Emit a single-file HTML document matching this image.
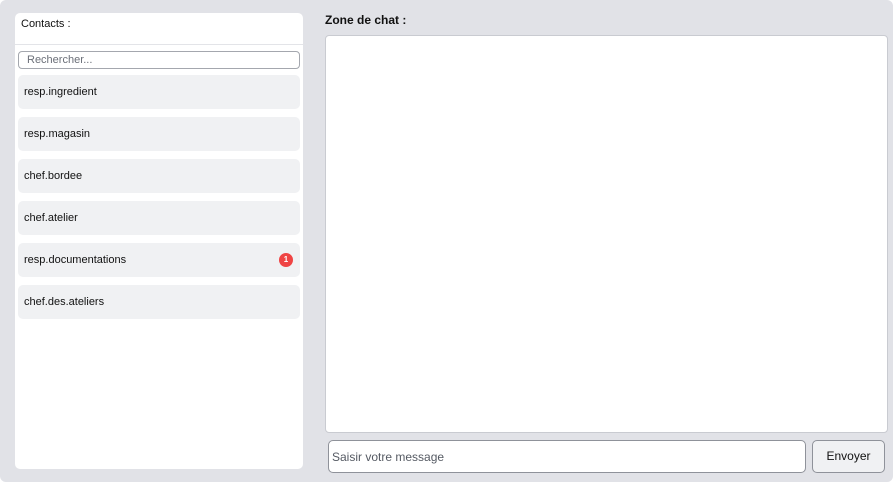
<!DOCTYPE html>
<html><head><style>
*{box-sizing:border-box;margin:0;padding:0}
body{width:895px;height:484px;background:#fff;font-family:"Liberation Sans",sans-serif;position:relative;overflow:hidden}
.outer{position:absolute;left:0;top:0;width:893px;height:482px;background:#e1e2e7;border-radius:6px}
.side{position:absolute;left:15px;top:13px;width:288px;height:456px;background:#fff;border-radius:5px}
.side h3{font-weight:normal;font-size:11px;color:#111;position:absolute;left:6px;top:5px}
.line{position:absolute;left:0;top:31px;width:288px;height:1px;background:#e3e4e8}
.search{position:absolute;left:3px;top:38px;width:282px;height:18px;border:1px solid #a4a7ae;border-radius:4px;font-size:11px;color:#6b6f78;padding:2px 8px}
.item{position:absolute;left:3px;width:282px;height:34px;background:#f0f1f3;border-radius:5px;font-size:11px;color:#111;padding:11px 6px}
.badge{position:absolute;right:7px;top:10px;width:14px;height:14px;border-radius:7px;background:#ef4444;color:#fff;font-size:8px;font-weight:bold;text-align:center;line-height:14px}
.title{position:absolute;left:325px;top:13px;font-size:12px;font-weight:bold;color:#111}
.chat{position:absolute;left:325px;top:35px;width:563px;height:398px;background:#fff;border:1px solid #c9cbd1;border-radius:4px}
.msg{position:absolute;left:328px;top:440px;width:478px;height:33px;background:#fff;border:1px solid #8f929a;border-radius:5px;font-size:12px;color:#555a63;padding:9px 3px}
.btn{position:absolute;left:812px;top:440px;width:73px;height:33px;background:#f0f1f3;border:1px solid #8f929a;border-radius:5px;font-size:12px;color:#111;text-align:center;line-height:31px}
</style></head><body>
<div class="outer"></div>
<div class="side">
<h3>Contacts :</h3><div class="line"></div>
<div class="search">Rechercher...</div>
<div class="item" style="top:62px">resp.ingredient</div>
<div class="item" style="top:104px">resp.magasin</div>
<div class="item" style="top:146px">chef.bordee</div>
<div class="item" style="top:188px">chef.atelier</div>
<div class="item" style="top:230px">resp.documentations<div class="badge">1</div></div>
<div class="item" style="top:272px">chef.des.ateliers</div>
</div>
<div class="title">Zone de chat :</div>
<div class="chat"></div>
<div class="msg">Saisir votre message</div>
<div class="btn">Envoyer</div>
</body></html>
